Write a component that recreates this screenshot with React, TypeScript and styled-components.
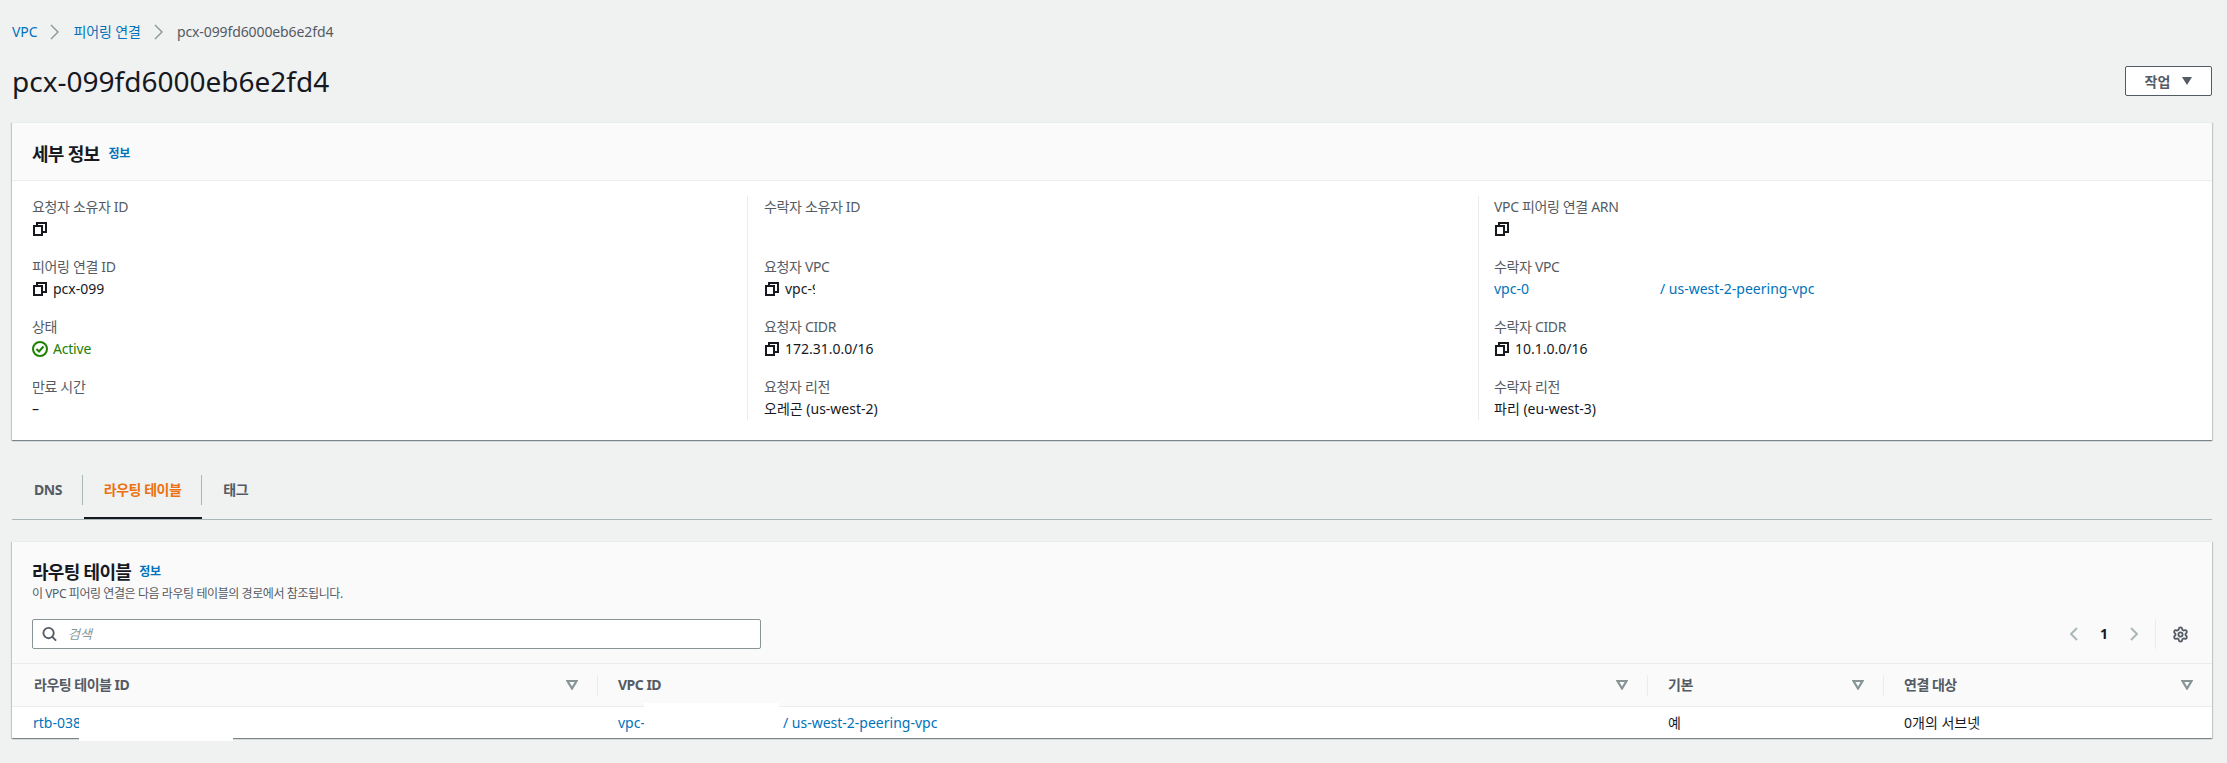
import React from 'react';
import styled, { createGlobalStyle } from 'styled-components';
import { Settings } from 'lucide-react';

const Global = createGlobalStyle`
  html, body { margin: 0; padding: 0; background: #f0f1f1; }
  body { font-family: "Noto Sans", "Noto Sans CJK KR", sans-serif; font-size: 14px; line-height: 20px; color: #16191f; }
`;
const Page = styled.div`
  width: 2227px; height: 763px; overflow: hidden; position: relative; box-sizing: border-box; padding: 22px 15px 0 12px; background: #f0f1f1;
`;
const Crumbs = styled.nav`display: flex; align-items: center; height: 20px; font-size: 14px; letter-spacing: -0.1px;`;
const Link = styled.a`color: #0073bb; text-decoration: none;`;
const CrumbCurrent = styled.span`color: #545b64;`;
const CrumbSep = styled.svg`width: 14px; height: 20px; margin: 0 11px; fill: none; stroke: #879596; stroke-width: 1.4;`;
const TitleRow = styled.div`display: flex; align-items: center; justify-content: space-between; margin-top: 17px; height: 44px;`;
const Title = styled.h1`margin: 0; font-size: 28px; line-height: 40px; font-weight: 400; color: #16191f;`;
const ActionButton = styled.button`
  width: 87px; height: 30px; box-sizing: border-box; border: 1px solid #545b64; border-radius: 2px; background: #fff; color: #545b64;
  font: 700 14px "Noto Sans", "Noto Sans CJK KR", sans-serif; display: flex; align-items: center; justify-content: center; gap: 12px; padding: 0;
`;
const Caret = styled.svg`width: 10px; height: 8px; fill: #545b64;`;
const Card = styled.section`
  background: #fff; box-shadow: 0 1px 1px 0 rgba(0,28,36,.3), 1px 1px 1px 0 rgba(0,28,36,.15), -1px 1px 1px 0 rgba(0,28,36,.15);
  border-top: 1px solid #eaeded; position: relative;
`;
const DetailCard = styled(Card)`margin-top: 19px; height: 317px;`;
const CardHead = styled.header`height: 58px; box-sizing: border-box; background: #fafafa; border-bottom: 1px solid #eaeded; padding: 4px 20px 0; display: flex; align-items: center; gap: 9px;`;
const HeadTitle = styled.h2`margin: 0; font-size: 18px; line-height: 24px; font-weight: 700; color: #16191f; letter-spacing: -0.7px;`;
const InfoLink = styled(Link)`font-size: 12px; font-weight: 700; line-height: 18px; letter-spacing: -0.2px;`;
const DetailGrid = styled.div`display: grid; grid-template-columns: 715px 731px 1fr; padding: 15px 20px 0; height: 224px;`;
const DetailCol = styled.div<{ $pad?: number }>`
  display: flex; flex-direction: column; gap: 18px;
  ${p => p.$pad ? `border-left: 1px solid #eaeded; padding-left: ${p.$pad}px;` : ''}
`;
const Field = styled.div`height: 42px;`;
const Label = styled.div`color: #545b64; line-height: 22px; font-size: 14px; letter-spacing: -0.35px;`;
const Value = styled.div`display: flex; align-items: center; gap: 6px; height: 22px; color: #16191f; font-size: 14px;`;
const Success = styled(Value)`color: #1d8102; gap: 5px; letter-spacing: -0.2px;`;
const CopyIcon = styled.svg`width: 14px; height: 14px; margin-left: 1px; fill: none; stroke: #16191f; stroke-width: 2; flex: none;`;
const StatusIcon = styled.svg`width: 16px; height: 16px; fill: none; stroke: #1d8102; stroke-width: 2; flex: none;`;
const Gap = styled.span<{ $w: number }>`display: inline-block; width: ${p => p.$w}px;`;
const Tabs = styled.div`display: flex; align-items: flex-start; margin-top: 35px; height: 44px; padding-left: 1px; border-bottom: 1px solid #aab7b8;`;
const Tab = styled.div<{ $active?: boolean; $last?: boolean }>`
  height: 30px; display: flex; align-items: center; padding: 0 20px 0 21px; font-weight: 700; font-size: 14px; position: relative; box-sizing: border-box; letter-spacing: -0.5px;
  color: ${p => p.$active ? '#ec7211' : '#545b64'};
  ${p => p.$last ? '' : 'border-right: 1px solid #aab7b8;'}
  ${p => p.$active ? `&::after { content: ''; position: absolute; left: 1px; right: -1px; top: 42px; height: 2px; background: #16191f; }` : ''}
`;
const TableCard = styled(Card)`margin-top: 21px; height: 196px;`;
const TableHead = styled.header`height: 122px; box-sizing: border-box; background: #fafafa; border-bottom: 1px solid #eaeded; padding: 18px 20px 0;`;
const TitleLine = styled.div`display: flex; align-items: center; gap: 8px; height: 24px;`;
const Desc = styled.div`font-size: 12px; line-height: 18px; color: #545b64; margin-top: 1px; letter-spacing: -0.42px;`;
const ToolRow = styled.div`display: flex; align-items: center; justify-content: space-between; margin-top: 16px; height: 30px;`;
const Search = styled.div`
  width: 729px; height: 30px; box-sizing: border-box; background: #fff; border: 1px solid #879596; border-radius: 2px;
  display: flex; align-items: center; padding-left: 9px; gap: 11px;
`;
const Placeholder = styled.span`font-style: italic; color: #879596; font-size: 13px;`;
const SearchIcon = styled.svg`width: 15px; height: 16px; fill: none; stroke: #545b64; stroke-width: 2;`;
const Pager = styled.div`display: flex; align-items: center; height: 30px; margin-right: 3px;`;
const PagerChevron = styled.svg`width: 12px; height: 16px; fill: none; stroke: #aab7b8; stroke-width: 2;`;
const PageNum = styled.span`font-weight: 700; font-size: 14px; width: 48px; text-align: center; color: #16191f;`;
const PagerRule = styled.span`width: 1px; height: 30px; background: #eaeded; margin: 0 16px 0 15px;`;
const Gear = styled(Settings)`width: 17px; height: 17px; color: #545b64;`;
const COLS = '585px 1050px 236px 1fr';
const HeaderRow = styled.div`display: grid; grid-template-columns: ${COLS}; height: 43px; background: #fafafa; border-bottom: 1px solid #eaeded; box-sizing: border-box;`;
const HeaderCell = styled.div<{ $first?: boolean }>`
  display: flex; align-items: center; justify-content: space-between; font-weight: 700; color: #545b64; font-size: 14px; position: relative; letter-spacing: -0.5px;
  padding: 0 19px 0 ${p => p.$first ? 22 : 21}px;
  ${p => p.$first ? '' : `&::before { content: ''; position: absolute; left: 0; top: 11px; height: 21px; width: 1px; background: #eaeded; }`}
`;
const Filter = styled.svg`width: 12px; height: 10px; fill: none; stroke: #879596; stroke-width: 2.200; flex: none;`;
const DataRow = styled.div`display: grid; grid-template-columns: ${COLS}; height: 31px; background: #fff; align-items: center;`;
const DataCell = styled.div`padding: 0 21px; font-size: 14px; color: #16191f; white-space: nowrap;`;
const Redact = styled.div<{ $l: number; $t: number; $w: number; $h: number }>`
  position: absolute; left: ${p => p.$l}px; top: ${p => p.$t}px; width: ${p => p.$w}px; height: ${p => p.$h}px; background: #fff;
`;

const Copy = () => (
  <CopyIcon viewBox="0 0 14 14"><rect x="1" y="4" width="8" height="9" /><path d="M4 4V1h9v9h-4" /></CopyIcon>
);
const Sep = () => <CrumbSep viewBox="0 0 14 20"><path d="M3 3l7 7-7 7" /></CrumbSep>;
const FilterIcon = () => <Filter viewBox="0 0 12 10"><path d="M1.500 1h9L6 8.500z" /></Filter>;

export default function App() {
  return (
    <>
      <Global />
      <Page>
        <Crumbs>
          <Link>VPC</Link><Sep />
          <Link>피어링 연결</Link><Sep />
          <CrumbCurrent>pcx-099fd6000eb6e2fd4</CrumbCurrent>
        </Crumbs>
        <TitleRow>
          <Title>pcx-099fd6000eb6e2fd4</Title>
          <ActionButton>작업<Caret viewBox="0 0 10 8"><path d="M0 0h10L5 8z" /></Caret></ActionButton>
        </TitleRow>
        <DetailCard>
          <CardHead><HeadTitle>세부 정보</HeadTitle><InfoLink>정보</InfoLink></CardHead>
          <DetailGrid>
            <DetailCol>
              <Field><Label>요청자 소유자 ID</Label><Value><Copy /></Value></Field>
              <Field><Label>피어링 연결 ID</Label><Value><Copy />pcx-099</Value></Field>
              <Field><Label>상태</Label><Success>
                <StatusIcon viewBox="0 0 16 16"><circle cx="8" cy="8" r="7" /><path d="M4.500 8l2.500 2.500L11.500 5.500" /></StatusIcon>Active
              </Success></Field>
              <Field><Label>만료 시간</Label><Value>–</Value></Field>
            </DetailCol>
            <DetailCol $pad={16}>
              <Field><Label>수락자 소유자 ID</Label></Field>
              <Field><Label>요청자 VPC</Label><Value><Copy />vpc-9</Value></Field>
              <Field><Label>요청자 CIDR</Label><Value><Copy />172.31.0.0/16</Value></Field>
              <Field><Label>요청자 리전</Label><Value>오레곤 (us-west-2)</Value></Field>
            </DetailCol>
            <DetailCol $pad={15}>
              <Field><Label>VPC 피어링 연결 ARN</Label><Value><Copy /></Value></Field>
              <Field><Label>수락자 VPC</Label><Value><Link>vpc-0<Gap $w={131} />/ us-west-2-peering-vpc</Link></Value></Field>
              <Field><Label>수락자 CIDR</Label><Value><Copy />10.1.0.0/16</Value></Field>
              <Field><Label>수락자 리전</Label><Value>파리 (eu-west-3)</Value></Field>
            </DetailCol>
          </DetailGrid>
        </DetailCard>
        <Tabs>
          <Tab>DNS</Tab>
          <Tab $active>라우팅 테이블</Tab>
          <Tab $last>태그</Tab>
        </Tabs>
        <TableCard>
          <TableHead>
            <TitleLine><HeadTitle>라우팅 테이블</HeadTitle><InfoLink>정보</InfoLink></TitleLine>
            <Desc>이 VPC 피어링 연결은 다음 라우팅 테이블의 경로에서 참조됩니다.</Desc>
            <ToolRow>
              <Search>
                <SearchIcon viewBox="0 0 16 16"><circle cx="7" cy="7" r="5.500" /><path d="M11 11l4 4" /></SearchIcon>
                <Placeholder>검색</Placeholder>
              </Search>
              <Pager>
                <PagerChevron viewBox="0 0 12 16"><path d="M9 2L3 8l6 6" /></PagerChevron>
                <PageNum>1</PageNum>
                <PagerChevron viewBox="0 0 12 16"><path d="M3 2l6 6-6 6" /></PagerChevron>
                <PagerRule />
                <Gear strokeWidth={2.6} />
              </Pager>
            </ToolRow>
          </TableHead>
          <HeaderRow>
            <HeaderCell $first>라우팅 테이블 ID<FilterIcon /></HeaderCell>
            <HeaderCell>VPC ID<FilterIcon /></HeaderCell>
            <HeaderCell>기본<FilterIcon /></HeaderCell>
            <HeaderCell>연결 대상<FilterIcon /></HeaderCell>
          </HeaderRow>
          <DataRow>
            <DataCell><Link>rtb-038</Link></DataCell>
            <DataCell><Link>vpc-<Gap $w={138} />/ us-west-2-peering-vpc</Link></DataCell>
            <DataCell>예</DataCell>
            <DataCell>0개의 서브넷</DataCell>
          </DataRow>
        </TableCard>
        <Redact $l={79} $t={707} $w={154} $h={34} />
        <Redact $l={644} $t={703} $w={135} $h={35} />
        <Redact $l={815} $t={278} $w={12} $h={22} />
      </Page>
    </>
  );
}
